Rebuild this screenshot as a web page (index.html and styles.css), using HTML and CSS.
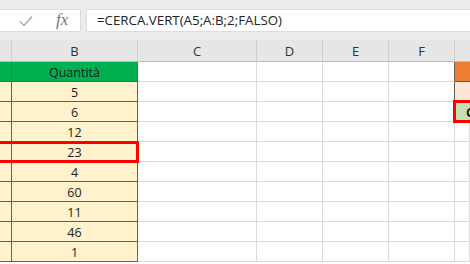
FILE: index.html
```html
<!DOCTYPE html>
<html lang="it">
<head>
<meta charset="utf-8">
<title>CERCA.VERT</title>
<link rel="stylesheet" href="styles.css">
</head>
<body>
<div class="app">
  <div class="formula-bar">
    <div class="controls">
      <svg class="check" width="14" height="12" viewBox="0 0 14 12"><path d="M1 6.5 L5 10.5 L13 1.5" fill="none" stroke="#a8a8a8" stroke-width="1.4"/></svg>
      <span class="fx">fx</span>
    </div>
    <div class="formula">=CERCA.VERT(A5;A:B;2;FALSO)</div>
  </div>
  <div class="sheet">
    <div class="hdr"></div><div class="hdr">B</div><div class="hdr">C</div><div class="hdr">D</div><div class="hdr">E</div><div class="hdr">F</div><div class="hdr last"></div>

    <div class="c t th"></div><div class="c t th">Quantità</div><div class="c"></div><div class="c"></div><div class="c"></div><div class="c dk"></div><div class="c orange"></div>
    <div class="c t"></div><div class="c t">5</div><div class="c"></div><div class="c"></div><div class="c"></div><div class="c dk"></div><div class="c peach"></div>
    <div class="c t"></div><div class="c t">6</div><div class="c"></div><div class="c"></div><div class="c"></div><div class="c"></div><div class="c lgreen"><span class="cut">C</span></div>
    <div class="c t"></div><div class="c t">12</div><div class="c"></div><div class="c"></div><div class="c"></div><div class="c"></div><div class="c"></div>
    <div class="c t"></div><div class="c t">23</div><div class="c"></div><div class="c"></div><div class="c"></div><div class="c"></div><div class="c"></div>
    <div class="c t"></div><div class="c t">4</div><div class="c"></div><div class="c"></div><div class="c"></div><div class="c"></div><div class="c"></div>
    <div class="c t"></div><div class="c t">60</div><div class="c"></div><div class="c"></div><div class="c"></div><div class="c"></div><div class="c"></div>
    <div class="c t"></div><div class="c t">11</div><div class="c"></div><div class="c"></div><div class="c"></div><div class="c"></div><div class="c"></div>
    <div class="c t"></div><div class="c t">46</div><div class="c"></div><div class="c"></div><div class="c"></div><div class="c"></div><div class="c"></div>
    <div class="c t"></div><div class="c t">1</div><div class="c"></div><div class="c"></div><div class="c"></div><div class="c"></div><div class="c"></div>

    <div class="sel sel-left"></div>
    <div class="sel sel-right"></div>
  </div>
</div>
</body>
</html>
```
FILE: styles.css
```css
* { box-sizing: border-box; }
html, body { margin: 0; padding: 0; }
body {
  width: 470px;
  height: 264px;
  overflow: hidden;
  background: #ffffff;
  font-family: "Open Sans", "Liberation Sans", sans-serif;
}
.app { width: 470px; }
.formula-bar {
  display: flex;
  gap: 5px;
  background: #ececec;
  padding: 9px 0 8px 0;
  height: 40px;
}
.controls {
  width: 81px;
  height: 23px;
  background: #ffffff;
  border: 1px solid #dcdcdc;
  border-left: none;
  display: flex;
  align-items: center;
  padding-left: 19px;
  gap: 23px;
}
.check { margin-top: 1px; }
.fx {
  font-family: "Liberation Serif", "DejaVu Serif", serif;
  font-style: italic;
  font-size: 17px;
  color: #777777;
  line-height: 1;
  margin-top: -2px;
}
.formula {
  flex: 1;
  height: 23px;
  background: #ffffff;
  border: 1px solid #dcdcdc;
  border-right: none;
  font-size: 13.3px;
  line-height: 21px;
  color: #222222;
  padding-left: 10px;
  white-space: nowrap;
}
.sheet {
  position: relative;
  display: grid;
  grid-template-columns: 12px 126px 119px 66px 66px 66px 1fr;
  grid-template-rows: 22px;
  grid-auto-rows: 20px;
}
.hdr {
  background: #e6e6e6;
  border-right: 1px solid #cfcfcf;
  border-bottom: 1px solid #bdbdbd;
  font-size: 13px;
  color: #333333;
  display: flex;
  align-items: center;
  justify-content: center;
  padding-top: 1px;
}
.hdr.last { border-right: none; }
.c {
  border-right: 1px solid #dadada;
  border-bottom: 1px solid #dadada;
  font-size: 12.5px;
  color: #222222;
  display: flex;
  align-items: center;
  justify-content: center;
  padding-top: 2px;
  overflow: hidden;
}
.c.t {
  background: #fff2cc;
  border-right: 1px solid #5f5f5f;
  border-bottom: 1px solid #5f5f5f;
}
.c.th {
  background: #00b050;
  color: #1a1a1a;
}
.c.dk { border-right: 1px solid #5f5f5f; }
.c.orange {
  background: #ed7d31;
  border-bottom: 1px solid #5f5f5f;
  border-right: none;
}
.c.peach {
  background: #fce4d6;
  border-right: none;
}
.c.lgreen {
  background: #c6e0b4;
  border-right: none;
  justify-content: flex-start;
  padding-left: 11px;
  font-weight: 700;
}
.cut { color: #1a1a1a; }
.sel {
  position: absolute;
  border: 3px solid #ff0000;
}
.sel-left {
  left: -4px;
  top: 101px;
  width: 143px;
  height: 22px;
}
.sel-right {
  left: 453px;
  top: 60px;
  width: 30px;
  height: 23px;
}
```
